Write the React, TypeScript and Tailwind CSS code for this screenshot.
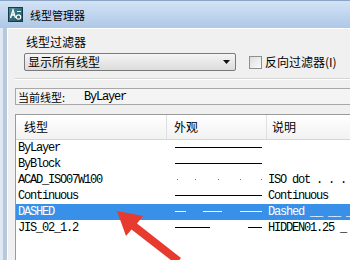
import React from "react";

const CJK = "font-['Noto_Sans_CJK_SC','Noto_Sans_CJK_JP',sans-serif]";
const MONO = "font-['Liberation_Mono','DejaVu_Sans_Mono',monospace] text-[12px] tracking-[-1.2px] leading-[16px]";

type Seg = [number, number];
type Row = { name: string; segs: Seg[] | "dots" | null; desc: string; sel?: boolean };

const rows: Row[] = [
  { name: "ByLayer", segs: [[0, 87]], desc: "" },
  { name: "ByBlock", segs: [[0, 87]], desc: "" },
  { name: "ACAD_ISO07W100", segs: "dots", desc: "ISO dot . . . ." },
  { name: "Continuous", segs: [[0, 87]], desc: "Continuous" },
  { name: "DASHED", segs: [[0, 11], [28, 47], [65, 87]], desc: "Dashed __ __ __", sel: true },
  { name: "JIS_02_1.2", segs: [[0, 35], [73, 87]], desc: "HIDDEN01.25 _" },
];

function LinePreview({ segs, color }: { segs: Row["segs"]; color: string }) {
  return (
    <svg width="90" height="16" viewBox="0 0 90 16">
      {segs === "dots"
        ? [2, 20, 43, 65, 86].map((x) => <rect key={x} x={x} y={7} width={1} height={1} fill="#777" />)
        : segs?.map(([a, b], i) => <rect key={i} x={a} y={7} width={b - a} height={1} fill={color} />)}
    </svg>
  );
}

function AppIcon() {
  return (
    <svg width="15" height="15" viewBox="0 0 15 15">
      <defs>
        <linearGradient id="ig" x1="0" y1="0" x2="1" y2="1">
          <stop offset="0" stopColor="#4f8f9c" />
          <stop offset="1" stopColor="#1d4f5e" />
        </linearGradient>
      </defs>
      <rect x="0.5" y="0.5" width="14" height="14" fill="url(#ig)" stroke="#163c48" />
      <path d="M2.5 11 L5 3 L7.5 11 M3.5 8 H6.5" stroke="#fff" strokeWidth="1.4" fill="none" />
      <circle cx="10.5" cy="10" r="2.2" fill="none" stroke="#fff" strokeWidth="1.2" />
      <path d="M9 4.5 H13" stroke="#cfe" strokeWidth="1" />
    </svg>
  );
}

export default function App() {
  return (
    <div className="relative w-[350px] h-[260px] overflow-hidden flex flex-col bg-[#f0f0f0]">
      {/* Title bar */}
      <div className="h-[28px] shrink-0 flex items-center pl-[8px] bg-gradient-to-b from-[#d2e3f5] to-[#aec8e7] border-t border-[#8aa5c6]">
        <AppIcon />
        <span className={`${CJK} ml-[7px] text-[11px] leading-[14px] text-black`}>线型管理器</span>
      </div>
      <div className="flex-1 flex min-h-0">
        {/* left frame */}
        <div className="w-[7px] shrink-0 flex">
          <div className="w-[3px] bg-[#dfe8f3]" />
          <div className="w-[4px] bg-[#b8c8dc]" />
        </div>
        {/* client */}
        <div className="flex-1 flex flex-col bg-[#f0f0f0] border-t border-l border-white pl-[7px]">
          <div className={`${CJK} ml-[11px] mt-[6px] text-[12px] leading-[14px] text-black`}>线型过滤器</div>
          <div className="flex items-center mt-[4px] ml-[9px]">
            <div className="w-[212px] h-[18px] rounded-[2px] border border-[#7a7a7a] bg-gradient-to-b from-[#f4f4f4] to-[#dcdcdc] flex items-center justify-between pl-[3px] pr-[4px]">
              <span className={`${CJK} text-[12px] leading-[14px] text-black`}>显示所有线型</span>
              <svg width="8" height="5" viewBox="0 0 8 5">
                <path d="M0 0 H7 L3.5 4 Z" fill="#111" />
              </svg>
            </div>
            <div className="ml-[13px] w-[13px] h-[13px] border border-[#8e8f8f] bg-gradient-to-br from-[#dedede] to-[#fbfbfb]" />
            <span className={`${CJK} ml-[3px] text-[12px] leading-[14px] text-black whitespace-nowrap`}>反向过滤器(I)</span>
          </div>
          <div className="mt-[7px] h-[2px] border-t border-[#d5d5d5] border-b border-b-white" />
          {/* current linetype */}
          <div className="mt-[8px] h-[17px] border-t border-l border-b border-[#a8a8a8] bg-[#f4f4f4] flex items-center pl-[2px]">
            <span className={`${CJK} text-[11px] leading-[14px] text-black`}>当前线型:</span>
            <span className={`${MONO} ml-[19px] text-black`}>ByLayer</span>
          </div>
          {/* list */}
          <div className="mt-[9px] flex-1 border-t border-l border-[#9a9a9a] bg-white flex flex-col">
            <div className="h-[25px] shrink-0 flex border-b border-[#d5d5d5] bg-gradient-to-b from-white to-[#f2f2f2]">
              <div className={`${CJK} w-[151px] pl-[8px] text-[12px] leading-[24px] text-black border-r border-[#e0e0e0]`}>线型</div>
              <div className={`${CJK} w-[100px] pl-[7px] text-[12px] leading-[24px] text-black border-r border-[#e0e0e0]`}>外观</div>
              <div className={`${CJK} flex-1 pl-[5px] text-[12px] leading-[24px] text-black`}>说明</div>
            </div>
            {rows.map((r) => (
              <div
                key={r.name}
                className={`h-[16px] flex items-center whitespace-nowrap ${r.sel ? "bg-[#3890e8] text-white" : "text-black"}`}
              >
                <div className={`${MONO} w-[151px] pl-[2px]`}>{r.name}</div>
                <div className="w-[100px] pl-[8px] flex items-center">
                  <LinePreview segs={r.segs} color={r.sel ? "#ffffff" : "#000000"} />
                </div>
                <div className={`${MONO} flex-1 pl-[1px]`}>{r.desc}</div>
              </div>
            ))}
          </div>
        </div>
      </div>
      {/* red arrow annotation */}
      <svg className="absolute left-0 top-0 pointer-events-none" width="350" height="260" viewBox="0 0 350 260">
        <polygon
          points="117,211 143,216 137,223.5 181,258 176,264 131.5,229.5 126,236"
          fill="#e63b2e"
        />
      </svg>
    </div>
  );
}
